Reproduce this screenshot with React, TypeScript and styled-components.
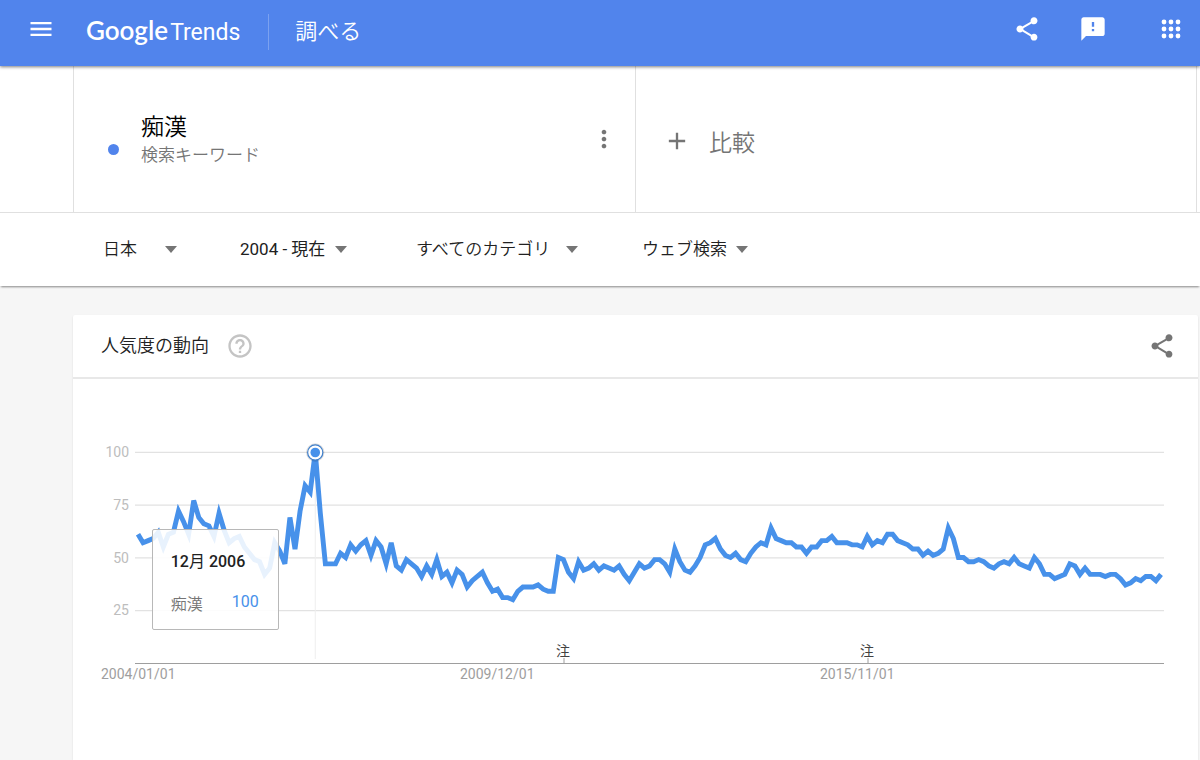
import React from "react";
import styled, { createGlobalStyle } from "styled-components";
import { MdAdd, MdHelpOutline, MdMenu, MdMoreVert, MdShare, MdSmsFailed } from "react-icons/md";

const GlobalStyle = createGlobalStyle`
  *, *::before, *::after { box-sizing: border-box; }
  body {
    margin: 0;
    background: #f6f6f6;
    color: #212121;
    font-family: Roboto, "Noto Sans CJK JP", sans-serif;
  }
  button, select { font: inherit; color: inherit; }
`;

const Page = styled.div`
  display: flex;
  flex-direction: column;
  min-height: 100vh;
`;

const TopBar = styled.header`
  display: flex;
  align-items: center;
  height: 66px;
  padding: 0 15px 8px 27px;
  background: #5184ec;
  color: #fff;
  box-shadow: 0 1px 3px rgba(0, 0, 0, 0.5);
  z-index: 1;
`;

const IconButton = styled.button`
  display: flex;
  align-items: center;
  justify-content: center;
  flex: none;
  width: 28px;
  height: 28px;
  padding: 0;
  border: 0;
  background: none;
  color: inherit;
  cursor: pointer;
`;

const Logo = styled.a`
  display: flex;
  align-items: baseline;
  gap: 2px;
  margin-left: 31px;
  padding-top: 4px;
  color: inherit;
  line-height: 32px;
  text-decoration: none;
`;

const LogoName = styled.span`
  font-family: Lato, sans-serif;
  font-size: 26px;
  font-weight: 600;
`;

const LogoProduct = styled.span`
  font-family: Roboto, sans-serif;
  font-size: 23px;
`;

const SectionName = styled.h1`
  margin: 6px 0 0 28px;
  padding-left: 26px;
  border-left: 1px solid #7ba1f0;
  font-size: 22px;
  font-weight: 350;
  line-height: 36px;
`;

const TopActions = styled.div`
  display: flex;
  align-items: center;
  gap: 38px;
  margin-left: auto;
`;

const AppsButton = styled(IconButton)`
  margin-left: 12px;
`;

const Terms = styled.section`
  display: grid;
  grid-template-columns: 1fr 1fr;
  height: 147px;
  padding: 0 3px 0 73px;
  border-bottom: 1px solid #e0e0e0;
  background: #fff;
`;

const Term = styled.div`
  display: flex;
  align-items: center;
  padding: 0 17px 0 34px;
  border-left: 1px solid #e0e0e0;
`;

const Dot = styled.span`
  width: 11px;
  height: 11px;
  margin: 20px 22px 0 0;
  border-radius: 50%;
  background: #5184ec;
`;

const TermText = styled.div`
  flex: 1;
  padding-top: 4px;
`;

const Keyword = styled.h2`
  margin: 0;
  color: #000;
  font-size: 23px;
  font-weight: 350;
  line-height: 28px;
`;

const Kind = styled.p`
  margin: 0;
  color: #757575;
  font-size: 17px;
  font-weight: 350;
  line-height: 26px;
`;

const MoreButton = styled(IconButton)`
  color: #757575;
`;

const Compare = styled.button`
  display: flex;
  align-items: center;
  gap: 18px;
  padding: 3px 0 0 27px;
  border: solid #e0e0e0;
  border-width: 0 1px;
  background: none;
  color: #757575;
  font-size: 23px;
  font-weight: 350;
  cursor: pointer;
`;

const Filters = styled.form`
  display: flex;
  align-items: center;
  height: 73px;
  padding: 0 0 1px 103px;
  background: #fff;
  box-shadow: 0 2px 2px -1px rgba(0, 0, 0, 0.45);
`;

const Filter = styled.label<{ $cell: number }>`
  display: flex;
  align-items: center;
  width: ${(p) => p.$cell}px;
`;

const FilterSelect = styled.select<{ $field: number; $weight: number }>`
  width: ${(p) => p.$field}px;
  height: 32px;
  padding: 0;
  border: 0;
  appearance: none;
  background: none;
  font-size: 17px;
  font-weight: ${(p) => p.$weight};
  cursor: pointer;
`;

const Caret = styled.span`
  border: 6px solid transparent;
  border-top: 7px solid #757575;
  border-bottom: 0;
`;

const Main = styled.main`
  display: flex;
  flex: 1;
  padding: 29px 2px 0 73px;
`;

const Card = styled.section`
  flex: 1;
  border-radius: 2px 2px 0 0;
  background: #fff;
  box-shadow: 0 1px 2px rgba(0, 0, 0, 0.12);
`;

const CardHeader = styled.header`
  display: flex;
  align-items: center;
  gap: 17px;
  height: 64px;
  padding: 0 22px 1px 28px;
  border-bottom: 2px solid #e8e8e8;
  color: #757575;
`;

const CardTitle = styled.h3`
  margin: 0;
  padding-bottom: 3px;
  color: #212121;
  font-size: 18px;
  font-weight: 350;
`;

const HelpButton = styled(IconButton)`
  color: #c4c4c4;
`;

const ShareButton = styled(IconButton)`
  margin-left: auto;
`;

const ChartArea = styled.div`
  position: relative;
`;

const ChartSvg = styled.svg`
  display: block;
  width: 100%;
  height: auto;
`;

const AxisText = styled.text`
  fill: #9e9e9e;
  font-size: 14px;
`;

const ScaleText = styled(AxisText)`
  fill: #bdbdbd;
  text-anchor: end;
`;

const NoteText = styled.text`
  fill: #424242;
  font-size: 14px;
  text-anchor: middle;
`;

const Tooltip = styled.div`
  position: absolute;
  top: 39.5%;
  left: 7%;
  width: 127px;
  height: 101px;
  padding: 20px 19px 18px 18px;
  border: 1px solid #b8b8b8;
  border-radius: 2px;
  background: rgba(255, 255, 255, 0.88);
  font-size: 16px;
  line-height: 24px;
`;

const TooltipDate = styled.div`
  font-weight: 500;
  white-space: nowrap;
`;

const TooltipMonth = styled.span`
  font-weight: 400;
`;

const TooltipRow = styled.div`
  display: flex;
  justify-content: space-between;
  margin-top: 16px;
  color: #757575;
`;

const TooltipTerm = styled.span`
  padding-top: 3px;
  font-weight: 350;
`;

const TooltipValue = styled.span`
  color: #4791ea;
`;

// Monthly interest, January 2004 onwards
const interest = [
  61, 57, 58, 59, 62, 55, 61, 62, 72, 67, 61, 77,
  69, 66, 65, 60, 71, 63, 57, 59, 60, 55, 52, 49,
  48, 42, 45, 57, 53, 47, 69, 54, 72, 84, 81, 100,
  71, 47, 47, 47, 52, 50, 56, 53, 56, 58, 51, 58,
  55, 47, 57, 46, 44, 49, 47, 45, 41, 46, 42, 49,
  41, 43, 38, 44, 42, 36, 39, 41, 43, 38, 34, 35,
  31, 31, 30, 34, 36, 36, 36, 37, 35, 34, 34, 50,
  49, 43, 40, 48, 44, 45, 47, 44, 46, 45, 44, 46,
  42, 39, 43, 47, 45, 46, 49, 49, 47, 43, 54, 48,
  44, 43, 46, 50, 56, 57, 59, 54, 51, 50, 52, 49,
  48, 52, 55, 57, 56, 64, 59, 58, 57, 57, 55, 55,
  52, 55, 55, 58, 58, 60, 57, 57, 57, 56, 56, 55,
  60, 56, 58, 57, 61, 61, 58, 57, 56, 54, 54, 51,
  53, 51, 52, 54, 64, 59, 50, 50, 48, 48, 49, 48,
  46, 45, 47, 48, 47, 50, 47, 46, 45, 50, 47, 42,
  42, 40, 41, 42, 47, 46, 42, 45, 42, 42, 42, 41,
  42, 42, 40, 37, 38, 40, 39, 41, 41, 39, 42,
];

const BASE = 284;
const PEAK = 35;
const xAt = (month: number) => 65 + (month * 1023) / (interest.length - 1);
const yAt = (value: number) => BASE - value * 2.11;

const filters = [
  { name: "地域", value: "日本", cell: 137, field: 62, weight: 350 },
  { name: "期間", value: "2004 - 現在", cell: 176, field: 95, weight: 400 },
  { name: "カテゴリ", value: "すべてのカテゴリ", cell: 226, field: 150, weight: 350 },
  { name: "検索の種類", value: "ウェブ検索", cell: 110, field: 94, weight: 350 },
];

function AppsIcon() {
  return (
    <svg width="20" height="20" viewBox="0 0 20 20" fill="currentColor" aria-hidden="true">
      {[3, 10, 17].map((y) => [3, 10, 17].map((x) => <circle key={`${x}-${y}`} cx={x} cy={y} r="2.4" />))}
    </svg>
  );
}

function TrendChart() {
  const points = interest.map((v, i) => `${xAt(i)},${yAt(v)}`).join(" ");
  return (
    <ChartSvg viewBox="0 0 1125 381" role="img" aria-label="人気度の動向">
      {[100, 75, 50, 25].map((v) => (
        <g key={v}>
          <line x1="62" x2="1091" y1={yAt(v) + 0.3} y2={yAt(v) + 0.3} stroke="#e2e2e2" strokeWidth="1.3" />
          <ScaleText x="56" y={Math.round(yAt(v)) + 5}>{v}</ScaleText>
        </g>
      ))}
      <line x1={xAt(PEAK)} x2={xAt(PEAK)} y1="73" y2="280" stroke="#eee" />
      <line x1="62" x2="1091" y1={BASE + 0.5} y2={BASE + 0.5} stroke="#9e9e9e" />
      {[490, 794].map((x) => (
        <g key={x}>
          <line x1={x + 1} x2={x + 1} y1="279" y2={BASE} stroke="#9e9e9e" />
          <NoteText x={x} y="277">注</NoteText>
        </g>
      ))}
      <AxisText x="28" y="300">2004/01/01</AxisText>
      <AxisText x="387" y="300">2009/12/01</AxisText>
      <AxisText x="747" y="300">2015/11/01</AxisText>
      <polyline points={points} fill="none" stroke="#4791ea" strokeWidth="4.9" strokeMiterlimit="4" />
      <circle cx={xAt(PEAK)} cy="73.5" r="9.2" fill="#000" opacity="0.13" />
      <circle cx={xAt(PEAK)} cy="73.5" r="7.6" fill="#fff" stroke="#3f7fcb" strokeWidth="1.2" />
      <circle cx={xAt(PEAK)} cy="73.5" r="4.8" fill="#4791ea" />
    </ChartSvg>
  );
}

export default function App() {
  return (
    <Page>
      <GlobalStyle />
      <TopBar>
        <IconButton aria-label="メニュー"><MdMenu size={28} /></IconButton>
        <Logo href="#">
          <LogoName>Google</LogoName>
          <LogoProduct>Trends</LogoProduct>
        </Logo>
        <SectionName>調べる</SectionName>
        <TopActions>
          <IconButton aria-label="共有"><MdShare size={28} /></IconButton>
          <IconButton aria-label="フィードバック"><MdSmsFailed size={28} /></IconButton>
          <AppsButton aria-label="アプリ"><AppsIcon /></AppsButton>
        </TopActions>
      </TopBar>
      <Terms>
        <Term>
          <Dot />
          <TermText>
            <Keyword>痴漢</Keyword>
            <Kind>検索キーワード</Kind>
          </TermText>
          <MoreButton aria-label="その他"><MdMoreVert size={28} /></MoreButton>
        </Term>
        <Compare type="button"><MdAdd size={28} />比較</Compare>
      </Terms>
      <Filters>
        {filters.map((f) => (
          <Filter key={f.name} $cell={f.cell}>
            <FilterSelect $field={f.field} $weight={f.weight} aria-label={f.name}>
              <option>{f.value}</option>
            </FilterSelect>
            <Caret />
          </Filter>
        ))}
      </Filters>
      <Main>
        <Card>
          <CardHeader>
            <CardTitle>人気度の動向</CardTitle>
            <HelpButton aria-label="ヘルプ"><MdHelpOutline size={28} /></HelpButton>
            <ShareButton aria-label="共有"><MdShare size={28} /></ShareButton>
          </CardHeader>
          <ChartArea>
            <TrendChart />
            <Tooltip role="tooltip">
              <TooltipDate>12<TooltipMonth>月</TooltipMonth> 2006</TooltipDate>
              <TooltipRow>
                <TooltipTerm>痴漢</TooltipTerm>
                <TooltipValue>100</TooltipValue>
              </TooltipRow>
            </Tooltip>
          </ChartArea>
        </Card>
      </Main>
    </Page>
  );
}
